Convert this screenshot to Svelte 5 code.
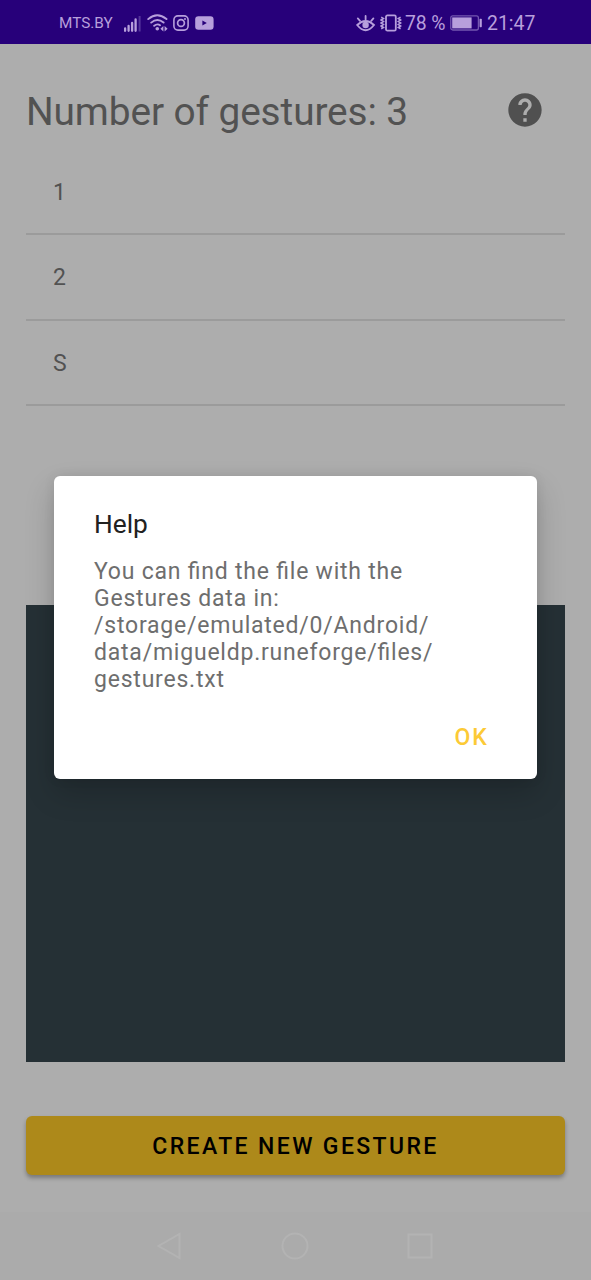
<script>
  const gestures = ['1', '2', 'S'];
  const message = [
    'You can find the file with the',
    'Gestures data in:',
    '/storage/emulated/0/Android/',
    'data/migueldp.runeforge/files/',
    'gestures.txt'
  ];
</script>

<div class="screen">
  <header class="status">
    <span class="carrier">MTS.BY</span>
    <svg class="signal" width="18" height="17" viewBox="0 0 18 17">
      <path d="M1.1 13.5v2.3M4.6 11v4.8M8.1 8v7.8M11.6 4.5v11.3" stroke="#b79fdc" stroke-width="2.3" stroke-linecap="round" />
      <path d="M15.6 1v15.5" stroke="#55349b" stroke-width="2" />
    </svg>
    <svg class="wifi" width="22" height="18" viewBox="0 0 22 18" fill="none" stroke="#b79fdc" stroke-width="1.9" stroke-linecap="round">
      <path d="M1.2 5.1Q10.2-2.7 19.5 5.1M4.2 8.6Q10.3 3.3 16.6 8.6M7.2 11.8Q10.3 9.3 13 11.2" />
      <circle cx="10.3" cy="14.8" r="1.8" fill="#b79fdc" stroke="none" />
      <path d="M16.4 12v5.4L13.4 14.7zM17.6 12v5.4L20.6 14.7z" fill="#b79fdc" stroke="none" />
    </svg>
    <svg class="insta" width="16" height="16" viewBox="0 0 16 16" fill="none" stroke="#b79fdc">
      <rect x=".9" y=".9" width="14.2" height="14.2" rx="4" stroke-width="1.6" />
      <circle cx="8" cy="8" r="3.4" stroke-width="1.7" />
      <circle cx="12" cy="4" r="1" fill="#b79fdc" stroke="none" />
    </svg>
    <svg class="tube" width="19" height="14" viewBox="0 0 19 14">
      <rect x=".2" y=".2" width="18.4" height="13.6" rx="3.2" fill="#b79fdc" />
      <path d="M7.4 4.4v5.2l4.400-2.600z" fill="#27007a" />
    </svg>

    <span class="space"></span>

    <svg class="eye" width="20" height="17" viewBox="0 0 20 17" fill="none" stroke="#b79fdc" stroke-width="1.8" stroke-linecap="round">
      <path d="M1.200 10Q9.600 2 18 10Q9.600 20.500 1.200 10z" />
      <circle cx="9.600" cy="10" r="3.200" fill="#b79fdc" stroke="none" />
      <path d="M9.600 1v3.500M1.800 3.400l2.200 2.400M17.400 3.400l-2.200 2.400" />
    </svg>
    <svg class="vibe" width="22" height="18" viewBox="0 0 22 18" fill="none" stroke="#b79fdc">
      <rect x="6" y="1.4" width="9.8" height="15.2" rx="1.4" stroke-width="1.8" />
      <path d="M1.2 3.2l2.2 1.3-2.2 1.5 2.2 1.5L1.2 9l2.2 1.500-2.200 1.500 2.200 1.500-2.200 1.300M20.600 3.200l-2.200 1.300 2.200 1.500-2.200 1.500L20.600 9l-2.200 1.500 2.200 1.500-2.200 1.500 2.200 1.300" stroke-width="1.6" />
    </svg>
    <span class="percent">78 %</span>
    <svg class="battery" width="33" height="16" viewBox="0 0 33 16">
      <rect x=".8" y=".8" width="27.6" height="14.2" rx="2" fill="none" stroke="#7457b0" stroke-width="1.3" />
      <rect x="2.2" y="2.4" width="19.4" height="11" fill="#b79fdc" />
      <rect x="29.6" y="3.8" width="2.2" height="8.4" rx=".8" fill="#b79fdc" />
    </svg>
    <span class="clock">21:47</span>
  </header>

  <main>
    <div class="heading">
      <h1>Number of gestures: 3</h1>
      <svg width="40" height="40" viewBox="0 0 24 24">
        <path fill="#505050" d="M12 2C6.48 2 2 6.48 2 12s4.48 10 10 10 10-4.48 10-10S17.52 2 12 2zm1 17h-2v-2h2v2zm2.07-7.75l-.9.92C13.45 12.9 13 13.5 13 15h-2v-.5c0-1.1.45-2.1 1.17-2.83l1.24-1.26c.37-.36.59-.86.59-1.41 0-1.1-.9-2-2-2s-2 .9-2 2H8c0-2.21 1.79-4 4-4s4 1.79 4 4c0 .88-.36 1.68-.93 2.25z" />
      </svg>
    </div>
    <ul>
      {#each gestures as g}
        <li>{g}</li>
      {/each}
    </ul>
    <div class="canvas"></div>
    <button class="create"><span>CREATE NEW GESTURE</span></button>
  </main>

  <nav>
    <svg width="26" height="30" viewBox="0 0 26 30"><path d="M23.5 3v24L2.500 15z" /></svg>
    <svg width="30" height="30" viewBox="0 0 30 30"><circle cx="15" cy="15" r="12.5" /></svg>
    <svg width="26" height="30" viewBox="0 0 26 30"><rect x="1.5" y="3.5" width="23" height="23" /></svg>
  </nav>

  <section class="dialog" role="dialog" aria-label="Help">
    <h2>Help</h2>
    <p>{#each message as line}<span>{line}</span>{/each}</p>
    <div class="actions"><button class="ok">OK</button></div>
  </section>
</div>

<style>
  :global(body) { margin: 0; }
  .screen {
    position: relative;
    width: 591px;
    height: 1280px;
    overflow: hidden;
    display: flex;
    flex-direction: column;
    background: #adadad;
    font-family: Roboto, sans-serif;
    color: #525252;
  }
  svg { display: block; flex: none; }
  .status {
    box-sizing: border-box;
    height: 44px;
    padding: 2px 56px 0 59px;
    display: flex;
    align-items: center;
    background: #27007a;
    color: #b79fdc;
    white-space: nowrap;
  }
  .carrier { font-size: 15.3px; width: 65px; }
  .wifi { margin-left: 5px; }
  .insta { margin-left: 4px; }
  .tube { margin-left: 6px; }
  .space { flex: 1; }
  .eye { margin-right: 4px; }
  .percent { font-size: 19.4px; width: 45px; margin-left: 3px; letter-spacing: -.15px; }
  .clock { font-size: 19.4px; width: 48px; margin-left: 4px; }
  main {
    flex: 1;
    padding: 0 26px;
    display: flex;
    flex-direction: column;
  }
  .heading {
    height: 106px;
    box-sizing: border-box;
    display: flex;
    align-items: center;
    justify-content: space-between;
    padding: 26px 20px 0 0;
  }
  h1 {
    margin: 0;
    padding-top: 3px;
    font-size: 38.8px;
    font-weight: 400;
    line-height: 46px;
    letter-spacing: -.1px;
    white-space: nowrap;
  }
  ul { list-style: none; margin: 0; padding: 0; height: 455px; }
  li {
    box-sizing: border-box;
    height: 85.3px;
    padding-left: 27px;
    border-bottom: 2px solid #9b9b9b;
    font-size: 23px;
    line-height: 86px;
  }
  .canvas { height: 457px; margin-right: .5px; background: #253035; }
  .create {
    height: 59px;
    margin: 54px 0 0;
    padding: 2px 0 0;
    border: 0;
    border-radius: 6px;
    background: #ad891a;
    box-shadow: 0 3px 4px rgba(0, 0, 0, .3);
    font: 500 23px Roboto, sans-serif;
    letter-spacing: 2.38px;
    color: #000;
  }
  nav {
    height: 68px;
    display: flex;
    align-items: center;
    justify-content: center;
    gap: 97.5px;
    padding-right: 2px;
    background: #ababab;
  }
  nav svg { fill: none; stroke: #b3b3b3; stroke-width: 2; }
  .dialog {
    position: absolute;
    left: 54px;
    top: 476px;
    width: 483px;
    height: 303px;
    box-sizing: border-box;
    padding: 33px 40px 0;
    border-radius: 6px;
    background: #fff;
    box-shadow: 0 14px 30px rgba(0, 0, 0, .18), 0 0 12px rgba(0, 0, 0, .08);
  }
  h2 { margin: 0; font-size: 26.3px; font-weight: 400; line-height: 31px; color: #212121; }
  p {
    margin: 18px 0 0;
    font-size: 23px;
    line-height: 27px;
    letter-spacing: .78px;
    font-feature-settings: "liga" 1;
    color: #6e6e6e;
    white-space: nowrap;
  }
  p span { display: block; }
  .actions { display: flex; justify-content: flex-end; margin-top: 31px; }
  .ok {
    border: 0;
    padding: 0 8px 0 0;
    background: none;
    font: 500 23px/28px Roboto, sans-serif;
    letter-spacing: 2.1px;
    color: #fcca36;
  }
</style>
